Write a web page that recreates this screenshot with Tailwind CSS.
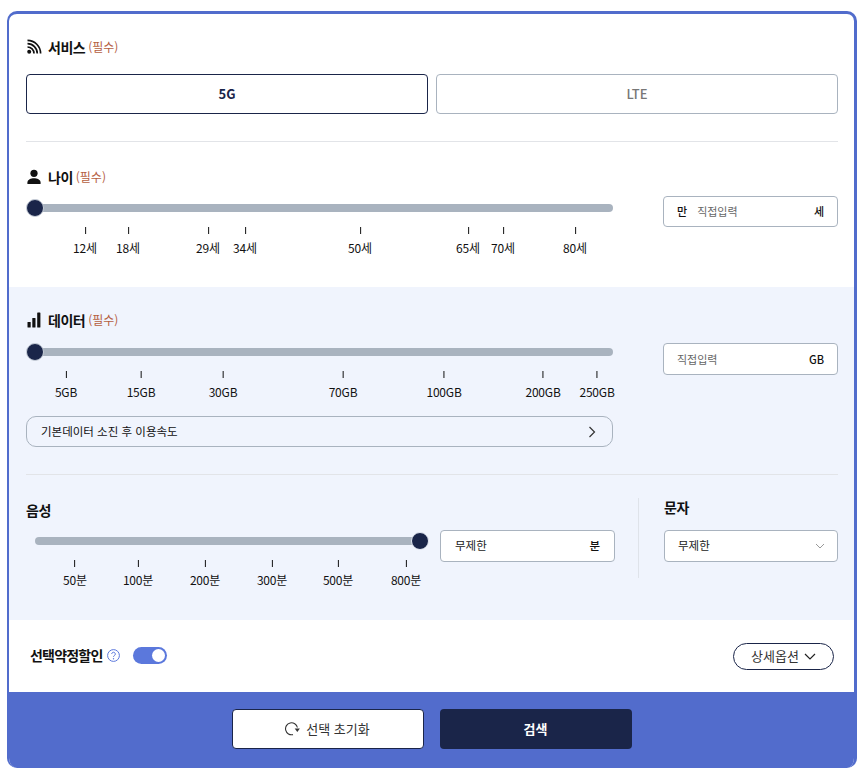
<!DOCTYPE html>
<html lang="ko">
<head>
<meta charset="utf-8">
<script src="https://cdn.jsdelivr.net/npm/@tailwindcss/browser@4"></script>
<title>요금제 검색</title>
</head>
<body class="bg-white font-['Noto_Sans_CJK_KR','Noto_Sans',sans-serif] text-[#111] text-[12px]">
<div class="ml-[7px] mt-[11px] w-[850px] h-[757px] flex flex-col rounded-[10px] overflow-hidden border-t-[3px] border-l-2 border-r-[3px] border-[#516ccc] bg-white">

  <section class="h-[273px] pl-[17px] pr-[16px] shrink-0 flex flex-col">
    <div class="h-[20px] mt-[23px] flex items-center gap-[6px]">
      <svg class="w-[16px] h-[16px]" viewBox="0 0 16 16" fill="none" stroke="#111" stroke-width="1.700"><circle cx="3.200" cy="12.800" r="2" fill="#111" stroke="none"/><path d="M1.500 8a6.500 6.500 0 0 1 6.500 6.500"/><path d="M1.500 4.700a9.800 9.800 0 0 1 9.800 9.800"/><path d="M1.500 1.400a13.100 13.100 0 0 1 13.100 13.100"/></svg>
      <b class="text-[14px] font-bold tracking-[-0.5px]">서비스</b>
      <span class="text-[12px] text-[#b5603f] -ml-[3px]">(필수)</span>
    </div>
    <div class="mt-[17px] flex gap-[8px]">
      <button class="flex-1 h-[40px] rounded-[4px] border border-[#1a2549] font-bold text-[13px] text-[#1a2549]">5G</button>
      <button class="flex-1 h-[40px] rounded-[4px] border border-[#a9b3bf] font-medium text-[13px] text-[#777]">LTE</button>
    </div>
    <div class="mt-[27px] h-px bg-[#e2e4e8]"></div>
    <div class="h-[20px] mt-[25px] flex items-center gap-[6px]">
      <svg class="w-[16px] h-[16px]" viewBox="0 0 16 16" fill="#111"><circle cx="8" cy="4.300" r="3.600"/><path d="M1.400 15v-1.600C1.400 10.600 5 9.200 8 9.200s6.600 1.400 6.600 4.200V15z"/></svg>
      <b class="text-[14px] font-bold tracking-[-0.5px]">나이</b>
      <span class="text-[12px] text-[#b5603f] -ml-[3px]">(필수)</span>
    </div>
    <div class="mt-[8px] flex justify-between">
      <div class="w-[587px]">
        <div class="relative h-[8px] mt-[9px] ml-[9px] w-[578px] rounded-full bg-[#a9b3bf]">
          <span class="absolute -left-[9px] -top-[4px] w-[16px] h-[16px] rounded-full bg-[#1a2549] border border-[#c9d0da] box-content -mt-px"></span>
        </div>
        <div class="relative h-[36px] mt-[15px] text-[12px] tracking-[-0.2px]">
          <div class="absolute top-0 -translate-x-1/2 flex flex-col items-center" style="left:60px"><i class="w-px h-[7px] bg-[#111]"></i><span class="mt-[5px] -ml-[2px] whitespace-nowrap">12세</span></div>
          <div class="absolute top-0 -translate-x-1/2 flex flex-col items-center" style="left:103px"><i class="w-px h-[7px] bg-[#111]"></i><span class="mt-[5px] -ml-[2px] whitespace-nowrap">18세</span></div>
          <div class="absolute top-0 -translate-x-1/2 flex flex-col items-center" style="left:183px"><i class="w-px h-[7px] bg-[#111]"></i><span class="mt-[5px] -ml-[2px] whitespace-nowrap">29세</span></div>
          <div class="absolute top-0 -translate-x-1/2 flex flex-col items-center" style="left:220px"><i class="w-px h-[7px] bg-[#111]"></i><span class="mt-[5px] -ml-[2px] whitespace-nowrap">34세</span></div>
          <div class="absolute top-0 -translate-x-1/2 flex flex-col items-center" style="left:335px"><i class="w-px h-[7px] bg-[#111]"></i><span class="mt-[5px] -ml-[2px] whitespace-nowrap">50세</span></div>
          <div class="absolute top-0 -translate-x-1/2 flex flex-col items-center" style="left:443px"><i class="w-px h-[7px] bg-[#111]"></i><span class="mt-[5px] -ml-[2px] whitespace-nowrap">65세</span></div>
          <div class="absolute top-0 -translate-x-1/2 flex flex-col items-center" style="left:478px"><i class="w-px h-[7px] bg-[#111]"></i><span class="mt-[5px] -ml-[2px] whitespace-nowrap">70세</span></div>
          <div class="absolute top-0 -translate-x-1/2 flex flex-col items-center" style="left:550px"><i class="w-px h-[7px] bg-[#111]"></i><span class="mt-[5px] -ml-[2px] whitespace-nowrap">80세</span></div>
        </div>
      </div>
      <div class="w-[175px] h-[31px] mt-[1px] px-[13px] rounded-[4px] border border-[#a9b3bf] bg-white flex items-center text-[11px]">
        <b class="font-medium">만</b><span class="ml-[10px] text-[#666]">직접입력</span><b class="ml-auto font-medium">세</b>
      </div>
    </div>
  </section>

  <section class="h-[333px] pl-[17px] pr-[16px] shrink-0 bg-[#f0f4fd] flex flex-col">
    <div class="h-[20px] mt-[23px] flex items-center gap-[6px]">
      <svg class="w-[16px] h-[16px]" viewBox="0 0 16 16" fill="#111"><rect x="1.500" y="10" width="3.200" height="5.600" rx=".6"/><rect x="6.300" y="6" width="3.200" height="9.600" rx=".6"/><rect x="11.200" y="0.500" width="3.200" height="15.100" rx=".6"/></svg>
      <b class="text-[14px] font-bold tracking-[-0.5px]">데이터</b>
      <span class="text-[12px] text-[#b5603f] -ml-[3px]">(필수)</span>
    </div>
    <div class="mt-[8px] flex justify-between">
      <div class="w-[587px]">
        <div class="relative h-[8px] mt-[10px] ml-[9px] w-[578px] rounded-full bg-[#a9b3bf]">
          <span class="absolute -left-[9px] -top-[4px] w-[16px] h-[16px] rounded-full bg-[#1a2549] border border-[#c9d0da] box-content -mt-px"></span>
        </div>
        <div class="relative h-[37px] mt-[15px] text-[12px] tracking-[-0.2px]">
          <div class="absolute top-0 -translate-x-1/2 flex flex-col items-center" style="left:40px"><i class="w-px h-[7px] bg-[#111]"></i><span class="mt-[5px] whitespace-nowrap">5GB</span></div>
          <div class="absolute top-0 -translate-x-1/2 flex flex-col items-center" style="left:115px"><i class="w-px h-[7px] bg-[#111]"></i><span class="mt-[5px] whitespace-nowrap">15GB</span></div>
          <div class="absolute top-0 -translate-x-1/2 flex flex-col items-center" style="left:197px"><i class="w-px h-[7px] bg-[#111]"></i><span class="mt-[5px] whitespace-nowrap">30GB</span></div>
          <div class="absolute top-0 -translate-x-1/2 flex flex-col items-center" style="left:317px"><i class="w-px h-[7px] bg-[#111]"></i><span class="mt-[5px] whitespace-nowrap">70GB</span></div>
          <div class="absolute top-0 -translate-x-1/2 flex flex-col items-center" style="left:418px"><i class="w-px h-[7px] bg-[#111]"></i><span class="mt-[5px] whitespace-nowrap">100GB</span></div>
          <div class="absolute top-0 -translate-x-1/2 flex flex-col items-center" style="left:517px"><i class="w-px h-[7px] bg-[#111]"></i><span class="mt-[5px] whitespace-nowrap">200GB</span></div>
          <div class="absolute top-0 -translate-x-1/2 flex flex-col items-center" style="left:571px"><i class="w-px h-[7px] bg-[#111]"></i><span class="mt-[5px] whitespace-nowrap">250GB</span></div>
        </div>
        <button class="mt-[8px] w-full h-[31px] pl-[14px] pr-[15px] rounded-[10px] border border-[#a9b3bf] flex items-center justify-between text-[11.500px]">
          <span>기본데이터 소진 후 이용속도</span>
          <svg class="w-[10px] h-[12px]" viewBox="0 0 10 12" fill="none" stroke="#333" stroke-width="1.200"><path d="M2.500 1l5 5-5 5"/></svg>
        </button>
      </div>
      <div class="w-[175px] h-[32px] mt-[5px] px-[13px] rounded-[4px] border border-[#a9b3bf] bg-white flex items-center text-[11px]">
        <span class="text-[#666]">직접입력</span><b class="ml-auto font-medium">GB</b>
      </div>
    </div>
    <div class="mt-[27px] h-px bg-[#e2e4e8]"></div>
    <div class="mt-[23px] flex">
      <div class="w-[612px] flex flex-col">
        <b class="h-[20px] mt-[2px] text-[14px] font-bold leading-[20px] tracking-[-0.5px]">음성</b>
        <div class="flex">
          <div class="w-[414px]">
            <div class="relative h-[8px] mt-[17px] ml-[9px] w-[386px] rounded-full bg-[#a9b3bf]">
              <span class="absolute -right-[8px] -top-[4px] w-[16px] h-[16px] rounded-full bg-[#1a2549] border border-[#e6ebf5] box-content -mt-px"></span>
            </div>
            <div class="relative h-[36px] mt-[15px] text-[12px] tracking-[-0.2px]">
              <div class="absolute top-0 -translate-x-1/2 flex flex-col items-center" style="left:49px"><i class="w-px h-[7px] bg-[#111]"></i><span class="mt-[4px] whitespace-nowrap">50분</span></div>
              <div class="absolute top-0 -translate-x-1/2 flex flex-col items-center" style="left:112px"><i class="w-px h-[7px] bg-[#111]"></i><span class="mt-[4px] whitespace-nowrap">100분</span></div>
              <div class="absolute top-0 -translate-x-1/2 flex flex-col items-center" style="left:179px"><i class="w-px h-[7px] bg-[#111]"></i><span class="mt-[4px] whitespace-nowrap">200분</span></div>
              <div class="absolute top-0 -translate-x-1/2 flex flex-col items-center" style="left:246px"><i class="w-px h-[7px] bg-[#111]"></i><span class="mt-[4px] whitespace-nowrap">300분</span></div>
              <div class="absolute top-0 -translate-x-1/2 flex flex-col items-center" style="left:312px"><i class="w-px h-[7px] bg-[#111]"></i><span class="mt-[4px] whitespace-nowrap">500분</span></div>
              <div class="absolute top-0 -translate-x-1/2 flex flex-col items-center" style="left:380px"><i class="w-px h-[7px] bg-[#111]"></i><span class="mt-[4px] whitespace-nowrap">800분</span></div>
            </div>
          </div>
          <div class="w-[175px] h-[32px] mt-[10px] px-[14px] rounded-[4px] border border-[#a9b3bf] bg-white flex items-center text-[11.500px]">
            <span class="text-[#222]">무제한</span><b class="ml-auto font-medium">분</b>
          </div>
        </div>
      </div>
      <div class="w-px h-[80px] bg-[#dfe3ea]"></div>
      <div class="ml-[25px] w-[174px] flex flex-col">
        <b class="h-[20px] -mt-px text-[14px] font-bold leading-[20px] tracking-[-0.5px]">문자</b>
        <div class="h-[32px] mt-[13px] pl-[13px] pr-[12px] rounded-[4px] border border-[#a9b3bf] bg-white flex items-center justify-between text-[11.500px]">
          <span class="text-[#222]">무제한</span>
          <svg class="w-[10px] h-[6px]" viewBox="0 0 10 6" fill="none" stroke="#999" stroke-width="1"><path d="M1 1l4 4 4-4"/></svg>
        </div>
      </div>
    </div>
  </section>

  <section class="h-[72px] pl-[21px] pr-[20px] pb-[2px] shrink-0 flex items-center">
    <b class="text-[14px] font-bold tracking-[-0.8px]">선택약정할인</b>
    <svg class="w-[13px] h-[13px] ml-[5px]" viewBox="0 0 13 13" fill="none"><circle cx="6.500" cy="6.500" r="5.900" stroke="#5b78dc" stroke-width="1"/><path d="M4.700 5a1.800 1.800 0 1 1 2.700 1.600c-.6.300-.9.700-.9 1.300" stroke="#5b78dc" stroke-width="1" fill="none"/><circle cx="6.500" cy="9.700" r=".7" fill="#5b78dc"/></svg>
    <div class="ml-[13px] w-[34px] h-[17px] rounded-full bg-[#5b78dc] flex items-center justify-end pr-[2px]"><span class="w-[13px] h-[13px] rounded-full bg-white"></span></div>
    <button class="ml-auto mt-[2px] w-[101px] h-[27px] rounded-full border border-[#1a2549] flex items-center justify-center gap-[5px] text-[13px] text-[#333]">
      <span>상세옵션</span>
      <svg class="w-[12px] h-[7px]" viewBox="0 0 12 7" fill="none" stroke="#222" stroke-width="1.200"><path d="M1 1l5 5 5-5"/></svg>
    </button>
  </section>

  <footer class="flex-1 -mx-[2px] bg-[#526ccc] flex items-center justify-center gap-[16px] pb-[3px]">
    <button class="w-[192px] h-[40px] rounded-[4px] bg-white border border-[#1a2549] flex items-center justify-center gap-[6px] text-[13px] text-[#333]">
      <svg class="w-[15px] h-[15px]" viewBox="0 0 15 15" fill="none"><path d="M8 13.600A6 6 0 1 1 12.400 6.500" stroke="#333" stroke-width="1.100"/><path d="M9.700 7.400h5.200l-2.600 3.500z" fill="#333"/></svg>
      <span>선택 초기화</span>
    </button>
    <button class="w-[192px] h-[40px] rounded-[4px] bg-[#1a2549] font-bold text-[13px] text-white">검색</button>
  </footer>
</div>
</body>
</html>
